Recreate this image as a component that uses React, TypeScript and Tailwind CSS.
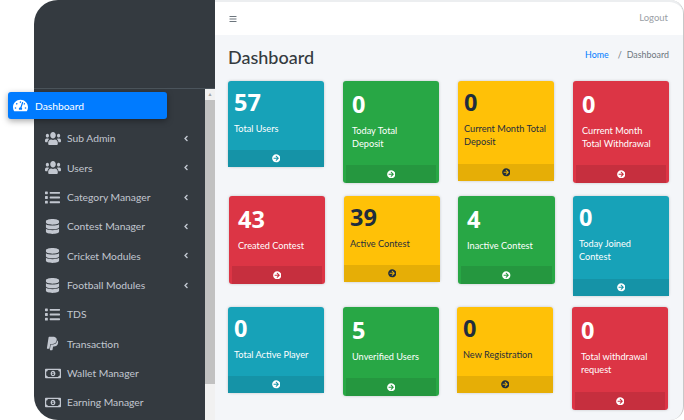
import { FaAngleLeft, FaArrowCircleRight, FaBars, FaDatabase, FaList, FaPaypal, FaRegMoneyBillAlt, FaTachometerAlt, FaUsers } from 'react-icons/fa';
import type { IconType } from 'react-icons';

type Tone = 'info' | 'success' | 'warning' | 'danger';

interface Stat {
  value: string;
  label: string;
  tone: Tone;
  height: string;
  inset?: boolean;
  width?: string;
}

const TONES: Record<Tone, { card: string; foot: string }> = {
  info: { card: 'bg-[#17a2b8] text-white', foot: 'bg-[#1593a7]' },
  success: { card: 'bg-[#28a745] text-white', foot: 'bg-[#25973f]' },
  warning: { card: 'bg-[#ffc107] text-[#1f2d3d]', foot: 'bg-[#e6ae06]' },
  danger: { card: 'bg-[#dc3545] text-white', foot: 'bg-[#c62f3e]' },
};

const ROW_ONE: Stat[] = [
  { value: '57', label: 'Total Users', tone: 'info', height: 'h-[86px]' },
  { value: '0', label: 'Today Total Deposit', tone: 'success', height: 'h-[102px]', inset: true },
  { value: '0', label: 'Current Month Total Deposit', tone: 'warning', height: 'h-[100px]' },
  { value: '0', label: 'Current Month Total Withdrawal', tone: 'danger', height: 'h-[102px]', inset: true },
];

const ROW_TWO: Stat[] = [
  { value: '43', label: 'Created Contest', tone: 'danger', height: 'h-[88px]', inset: true },
  { value: '39', label: 'Active Contest', tone: 'warning', height: 'h-[86px]' },
  { value: '4', label: 'Inactive Contest', tone: 'success', height: 'h-[88px]', inset: true, width: 'w-[97px]' },
  { value: '0', label: 'Today Joined Contest', tone: 'info', height: 'h-[100px]' },
];

const ROW_THREE: Stat[] = [
  { value: '0', label: 'Total Active Player', tone: 'info', height: 'h-[86px]' },
  { value: '5', label: 'Unverified Users', tone: 'success', height: 'h-[89px]', inset: true },
  { value: '0', label: 'New Registration', tone: 'warning', height: 'h-[86px]' },
  { value: '0', label: 'Total withdrawal request', tone: 'danger', height: 'h-[103px]', inset: true },
];

const MENU: { label: string; icon: IconType; arrow?: boolean; box: string; stretch?: boolean }[] = [
  { label: 'Sub Admin', icon: FaUsers, arrow: true, box: 'h-[15px] w-[16px]', stretch: true },
  { label: 'Users', icon: FaUsers, arrow: true, box: 'h-[15px] w-[16px]', stretch: true },
  { label: 'Category Manager', icon: FaList, arrow: true, box: 'h-[15px] w-[15px]' },
  { label: 'Contest Manager', icon: FaDatabase, arrow: true, box: 'h-[15px] w-[15px]' },
  { label: 'Cricket Modules', icon: FaDatabase, arrow: true, box: 'h-[15px] w-[15px]' },
  { label: 'Football Modules', icon: FaDatabase, arrow: true, box: 'h-[15px] w-[15px]' },
  { label: 'TDS', icon: FaList, box: 'h-[15px] w-[15px]' },
  { label: 'Transaction', icon: FaPaypal, box: 'h-[15px] w-[15px]' },
  { label: 'Wallet Manager', icon: FaRegMoneyBillAlt, box: 'h-[15px] w-[16px]' },
  { label: 'Earning Manager', icon: FaRegMoneyBillAlt, box: 'h-[15px] w-[16px]' },
];

function StatCard({ stat }: { stat: Stat }) {
  const tone = TONES[stat.tone];
  return (
    <div className={`flex flex-col rounded-[3px] shadow-[0_0_3px_rgba(0,0,0,0.2)] ${stat.width ?? 'w-[96px]'} ${stat.height} ${tone.card}`}>
      <div className={stat.inset ? 'pt-[4.5px] pl-[9px] pr-[14px]' : 'pt-[2.5px] pl-[6px] pr-[4px]'}>
        <div className="font-['Noto_Sans',sans-serif] text-[23.5px] font-bold leading-[36px]">{stat.value}</div>
        <div className="mt-[2px] text-[9.2px] leading-[13.5px]">{stat.label}</div>
      </div>
      <div className={`mt-auto flex items-center justify-center ${stat.inset ? 'mx-[3px] h-[18px]' : 'h-[17px]'} ${tone.foot}`}>
        <FaArrowCircleRight className="h-[8.5px] w-[8.5px]" />
      </div>
    </div>
  );
}

export default function App() {
  return (
    <div className="flex h-[420px] w-[684px] overflow-hidden bg-white font-['Lato',sans-serif]">
      <aside className="ml-[34px] flex h-[420px] w-[181px] flex-col rounded-l-[24px] bg-[#343a40]">
        <div className="h-[89px] shrink-0 border-b border-[#4b545c]" />
        <div className="flex min-h-0 flex-1">
          <nav className="w-[171px] shrink-0 pt-[3px]">
            <div className="-ml-[26px] mb-[5px] flex h-[27px] w-[159px] items-center rounded-[3px] bg-[#007bff] pl-[5px] text-[10.3px] text-white shadow-[0_2px_6px_rgba(0,0,0,0.35)]">
              <FaTachometerAlt className="h-[15px] w-[15px]" />
              <span className="ml-[7px] pt-[2px]">Dashboard</span>
            </div>
            {MENU.map((item) => (
              <div key={item.label} className="flex h-[29.3px] items-center pl-[11px] pr-[16px] text-[10.3px] text-[#c2c7d0]">
                <span className="mr-[7px] flex w-[15px] justify-center">
                  <item.icon className={`shrink-0 ${item.box}`} preserveAspectRatio={item.stretch ? 'none' : undefined} />
                </span>
                <span className="flex-1 pt-[1px]">{item.label}</span>
                {item.arrow && <FaAngleLeft className="h-[9px] w-[6px]" />}
              </div>
            ))}
          </nav>
          <div className="flex w-[10px] flex-col bg-[#f1f1f1]">
            <div className="h-[11px] text-center text-[5px] leading-[11px] text-[#a3a3a3]">▲</div>
            <div className="h-[284px] bg-[#c1c1c1]" />
          </div>
        </div>
      </aside>
      <main className="flex h-[420px] w-[469px] flex-col rounded-r-[14px] border-r border-[#c8c8c8] bg-[#f4f6f9]">
        <header className="flex h-[35px] shrink-0 items-center justify-between rounded-tr-[14px] border-t-[2px] border-[#eceef0] bg-white pl-[14px] pr-[15px] text-[9.5px] text-[#9aa0a6]">
          <FaBars className="h-[8px] w-[8px] text-[#6c757d]" />
          <span>Logout</span>
        </header>
        <div className="flex h-[46px] shrink-0 items-start justify-between pl-[13px] pr-[14px] pt-[11px]">
          <h1 className="text-[18px] font-medium leading-[22px] text-[#343a40]">Dashboard</h1>
          <div className="pt-[3px] text-[8.9px] leading-[12px] text-[#6c757d]">
            <span className="text-[#007bff]">Home</span>
            <span className="ml-[9px]">/</span>
            <span className="ml-[5px]">Dashboard</span>
          </div>
        </div>
        <div className="flex h-[115px] shrink-0 gap-[19px] pl-[13px]">
          {ROW_ONE.map((stat) => <StatCard key={stat.label} stat={stat} />)}
        </div>
        <div className="flex h-[111px] shrink-0 pl-[14px]">
          <div className="flex gap-[19px]">
            <StatCard stat={ROW_TWO[0]} />
            <StatCard stat={ROW_TWO[1]} />
          </div>
          <div className="ml-[18px] flex gap-[18px]">
            <StatCard stat={ROW_TWO[2]} />
            <StatCard stat={ROW_TWO[3]} />
          </div>
        </div>
        <div className="flex shrink-0 pl-[13px]">
          <div className="flex gap-[19px]">
            <StatCard stat={ROW_THREE[0]} />
            <StatCard stat={ROW_THREE[1]} />
          </div>
          <div className="ml-[18px] flex gap-[19px]">
            <StatCard stat={ROW_THREE[2]} />
            <StatCard stat={ROW_THREE[3]} />
          </div>
        </div>
      </main>
    </div>
  );
}
